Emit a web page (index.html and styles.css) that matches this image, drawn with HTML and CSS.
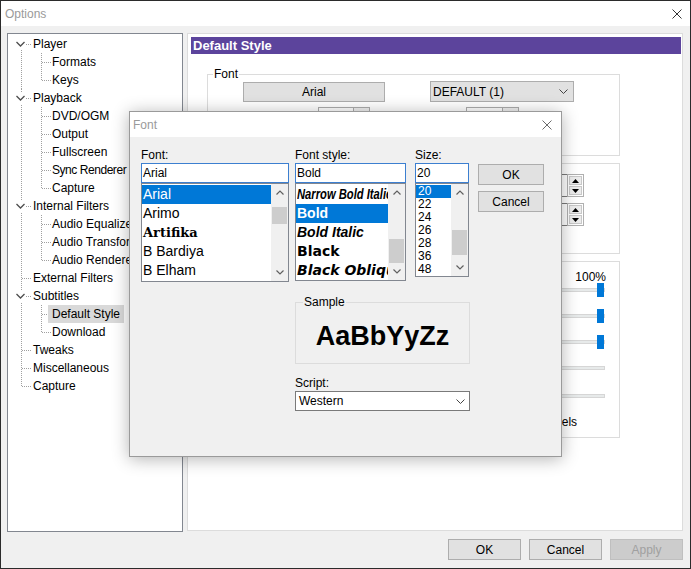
FILE: index.html
```html
<!DOCTYPE html>
<html>
<head>
<meta charset="utf-8">
<title>Options</title>
<link rel="stylesheet" href="styles.css">
</head>
<body>
<div class="window">
  <div class="titlebar">
    <span class="title">Options</span>
    <svg class="xbtn" width="10" height="10" viewBox="0 0 10 10"><path d="M0.5 0.5 L9.5 9.5 M9.5 0.5 L0.5 9.5" stroke="#333" stroke-width="1" fill="none"/></svg>
  </div>
  <div class="main">
    <div class="top">
      <div class="tree">
        <ul class="roots">
          <li class="root first">
            <div class="row"><span class="twisty"><svg width="11" height="12" viewBox="0 0 11 12"><rect width="11" height="12" fill="#fff"/><path d="M1.5 4 L5.5 8 L9.5 4" fill="none" stroke="#4d4d4d" stroke-width="1.3"/></svg></span><span class="label">Player</span></div>
            <ul class="kids">
              <li class="kid"><div class="row"><span class="label">Formats</span></div></li>
              <li class="kid last"><div class="row"><span class="label">Keys</span></div></li>
            </ul>
          </li>
          <li class="root">
            <div class="row"><span class="twisty"><svg width="11" height="12" viewBox="0 0 11 12"><rect width="11" height="12" fill="#fff"/><path d="M1.5 4 L5.5 8 L9.5 4" fill="none" stroke="#4d4d4d" stroke-width="1.3"/></svg></span><span class="label">Playback</span></div>
            <ul class="kids">
              <li class="kid"><div class="row"><span class="label">DVD/OGM</span></div></li>
              <li class="kid"><div class="row"><span class="label">Output</span></div></li>
              <li class="kid"><div class="row"><span class="label">Fullscreen</span></div></li>
              <li class="kid"><div class="row"><span class="label tight">Sync Renderer</span></div></li>
              <li class="kid last"><div class="row"><span class="label">Capture</span></div></li>
            </ul>
          </li>
          <li class="root">
            <div class="row"><span class="twisty"><svg width="11" height="12" viewBox="0 0 11 12"><rect width="11" height="12" fill="#fff"/><path d="M1.5 4 L5.5 8 L9.5 4" fill="none" stroke="#4d4d4d" stroke-width="1.3"/></svg></span><span class="label">Internal Filters</span></div>
            <ul class="kids">
              <li class="kid"><div class="row"><span class="label">Audio Equalizer</span></div></li>
              <li class="kid"><div class="row"><span class="label">Audio Transformer</span></div></li>
              <li class="kid last"><div class="row"><span class="label">Audio Renderer</span></div></li>
            </ul>
          </li>
          <li class="root">
            <div class="row"><span class="twisty"></span><span class="label">External Filters</span></div>
          </li>
          <li class="root">
            <div class="row"><span class="twisty"><svg width="11" height="12" viewBox="0 0 11 12"><rect width="11" height="12" fill="#fff"/><path d="M1.5 4 L5.5 8 L9.5 4" fill="none" stroke="#4d4d4d" stroke-width="1.3"/></svg></span><span class="label">Subtitles</span></div>
            <ul class="kids">
              <li class="kid"><div class="row"><span class="label sel">Default Style</span></div></li>
              <li class="kid last"><div class="row"><span class="label">Download</span></div></li>
            </ul>
          </li>
          <li class="root">
            <div class="row"><span class="twisty"></span><span class="label">Tweaks</span></div>
          </li>
          <li class="root">
            <div class="row"><span class="twisty"></span><span class="label">Miscellaneous</span></div>
          </li>
          <li class="root last">
            <div class="row"><span class="twisty"></span><span class="label">Capture</span></div>
          </li>
        </ul>
      </div>

      <div class="panel">
        <div class="page-header">Default Style</div>

        <div class="group g1">
          <span class="legend">Font</span>
          <div class="g1-row1">
            <div class="pbtn">Arial</div>
            <div class="combo"><span>DEFAULT (1)</span><svg width="9" height="5" viewBox="0 0 9 5"><path d="M0.5 0.5 L4.5 4.5 L8.5 0.5" fill="none" stroke="#444" stroke-width="1"/></svg></div>
          </div>
          <div class="g1-row2">
            <div class="spinbox sb1"><span class="sb-edit"></span><span class="sb-btn"></span></div>
            <div class="spinbox sb2"><span class="sb-edit"></span><span class="sb-btn"></span></div>
          </div>
        </div>

        <div class="group g2">
          <span class="legend">Position on screen</span>
          <div class="g2-row first">
            <div class="edit"></div>
            <div class="spin">
              <span><svg width="7" height="4" viewBox="0 0 7 4"><path d="M0 4 L3.5 0 L7 4 Z" fill="#000"/></svg></span>
              <span><svg width="7" height="4" viewBox="0 0 7 4"><path d="M0 0 L3.5 4 L7 0 Z" fill="#000"/></svg></span>
            </div>
          </div>
          <div class="g2-row">
            <div class="edit"></div>
            <div class="spin">
              <span><svg width="7" height="4" viewBox="0 0 7 4"><path d="M0 4 L3.5 0 L7 4 Z" fill="#000"/></svg></span>
              <span><svg width="7" height="4" viewBox="0 0 7 4"><path d="M0 0 L3.5 4 L7 0 Z" fill="#000"/></svg></span>
            </div>
          </div>
        </div>

        <div class="group g3">
          <span class="legend">Colors &amp; Transparency</span>
          <div class="pct">100%</div>
          <div class="slider first"><span class="thumb"></span></div>
          <div class="slider"><span class="thumb"></span></div>
          <div class="slider"><span class="thumb"></span></div>
          <div class="slider"><span class="thumb left"></span></div>
          <div class="slider fifth"><span class="thumb left"></span></div>
          <div class="check"><span class="cbox"></span><span>Link alpha channels</span></div>
        </div>
      </div>
    </div>

    <div class="buttons">
      <div class="btn">OK</div>
      <div class="btn">Cancel</div>
      <div class="btn disabled">Apply</div>
    </div>
  </div>

  <div class="dialog">
    <div class="dlg-title">
      <span>Font</span>
      <svg width="10" height="10" viewBox="0 0 10 10"><path d="M0.5 0.5 L9.5 9.5 M9.5 0.5 L0.5 9.5" stroke="#6a6a6a" stroke-width="1" fill="none"/></svg>
    </div>
    <div class="dlg-body">
      <div class="cols">
        <div class="col c-font">
          <div class="lbl">Font:</div>
          <div class="field">Arial</div>
          <div class="list l-font">
            <div class="items">
              <div class="it sel">Arial</div>
              <div class="it">Arimo</div>
              <div class="it artifika">Artifika</div>
              <div class="it">B Bardiya</div>
              <div class="it">B Elham</div>
            </div>
            <div class="vsb">
              <span class="arr"><svg width="8" height="5" viewBox="0 0 8 5"><path d="M0.5 4.5 L4 1 L7.5 4.5" fill="none" stroke="#606060" stroke-width="1.2"/></svg></span>
              <span class="trk"><span class="thm"></span></span>
              <span class="arr"><svg width="8" height="5" viewBox="0 0 8 5"><path d="M0.5 0.5 L4 4 L7.5 0.5" fill="none" stroke="#606060" stroke-width="1.2"/></svg></span>
            </div>
          </div>
        </div>

        <div class="col c-style">
          <div class="lbl">Font style:</div>
          <div class="field">Bold</div>
          <div class="list l-style">
            <div class="items">
              <div class="it s-nbi"><span class="narrow">Narrow Bold Italic</span></div>
              <div class="it s-b sel">Bold</div>
              <div class="it s-bi">Bold Italic</div>
              <div class="it s-black">Black</div>
              <div class="it s-blacko">Black Oblique</div>
            </div>
            <div class="vsb">
              <span class="arr"><svg width="8" height="5" viewBox="0 0 8 5"><path d="M0.5 4.5 L4 1 L7.5 4.5" fill="none" stroke="#606060" stroke-width="1.2"/></svg></span>
              <span class="trk"><span class="thm"></span></span>
              <span class="arr"><svg width="8" height="5" viewBox="0 0 8 5"><path d="M0.5 0.5 L4 4 L7.5 0.5" fill="none" stroke="#606060" stroke-width="1.2"/></svg></span>
            </div>
          </div>
        </div>

        <div class="col c-size">
          <div class="lbl">Size:</div>
          <div class="field">20</div>
          <div class="list l-size">
            <div class="items">
              <div class="it sel">20</div>
              <div class="it">22</div>
              <div class="it">24</div>
              <div class="it">26</div>
              <div class="it">28</div>
              <div class="it">36</div>
              <div class="it">48</div>
            </div>
            <div class="vsb">
              <span class="arr"><svg width="8" height="5" viewBox="0 0 8 5"><path d="M0.5 4.5 L4 1 L7.5 4.5" fill="none" stroke="#606060" stroke-width="1.2"/></svg></span>
              <span class="trk"><span class="thm"></span></span>
              <span class="arr"><svg width="8" height="5" viewBox="0 0 8 5"><path d="M0.5 0.5 L4 4 L7.5 0.5" fill="none" stroke="#606060" stroke-width="1.2"/></svg></span>
            </div>
          </div>
        </div>

        <div class="col c-btns">
          <div class="btn dbtn">OK</div>
          <div class="btn dbtn cancel">Cancel</div>
        </div>
      </div>

      <div class="lower">
        <div class="sample">
          <span class="legend dl">Sample</span>
          <div class="sample-text">AaBbYyZz</div>
        </div>
        <div class="lbl script-lbl">Script:</div>
        <div class="select"><span>Western</span><svg width="9" height="5" viewBox="0 0 9 5"><path d="M0.5 0.5 L4.5 4.5 L8.5 0.5" fill="none" stroke="#444" stroke-width="1"/></svg></div>
      </div>
    </div>
  </div>
</div>
</body>
</html>
```

FILE: styles.css
```css
* { box-sizing: border-box; }
html, body { margin: 0; padding: 0; }
body {
  width: 691px;
  height: 569px;
  overflow: hidden;
  font-family: "Liberation Sans", Arial, sans-serif;
  font-size: 12px;
  color: #000;
  background: #f0f0f0;
}
ul { list-style: none; margin: 0; padding: 0; }

.window {
  position: relative;
  width: 691px;
  height: 569px;
  border: 1px solid #2b2b2b;
  background: #f0f0f0;
  display: flex;
  flex-direction: column;
}

.titlebar {
  height: 25px;
  flex: none;
  background: #fff;
  display: flex;
  align-items: center;
  justify-content: space-between;
  padding: 0 8px 0 4px;
  color: #9a9a9a;
  font-size: 12px;
}

.main { padding: 7px 7px 0 6px; }
.top { display: flex; gap: 4px; align-items: flex-start; }

/* ---------- tree ---------- */
.tree {
  width: 176px;
  height: 499px;
  border: 1px solid #828790;
  background: #fff;
  padding-top: 1px;
  overflow: hidden;
}
.row { height: 18px; display: flex; white-space: nowrap; }
.label { line-height: 18px; padding: 0 4px; }
.label.tight { letter-spacing: -0.45px; }
.label.sel { background: #d9d9d9; }
.twisty { width: 21px; flex: none; display: flex; align-items: center; }
.twisty svg { margin-left: 7px; }

.root {
  background: repeating-linear-gradient(to bottom, #a0a0a0 0 1px, transparent 1px 2px) 13px 0 / 1px 100% no-repeat;
}
.root.first { background-position: 13px 9px; }
.root.last { background-size: 1px 10px; }
.root > .row {
  background: repeating-linear-gradient(to right, #a0a0a0 0 1px, transparent 1px 2px) 14px 9px / 9px 1px no-repeat;
}
.kid {
  background: repeating-linear-gradient(to bottom, #a0a0a0 0 1px, transparent 1px 2px) 33px 0 / 1px 100% no-repeat;
}
.kid.last { background-size: 1px 10px; }
.kid > .row {
  padding-left: 40px;
  background: repeating-linear-gradient(to right, #a0a0a0 0 1px, transparent 1px 2px) 34px 9px / 9px 1px no-repeat;
}

/* ---------- right panel ---------- */
.panel {
  width: 496px;
  height: 498px;
  border: 1px solid #dcdcdc;
  background: #fff;
  padding: 3px 1px 0 3px;
}
.page-header {
  height: 17px;
  background: #5c449c;
  color: #fff;
  font-weight: bold;
  font-size: 13px;
  line-height: 17px;
  padding-left: 2px;
}
.group {
  margin-left: 16px;
  width: 413px;
  border: 1px solid #dcdcdc;
}
.legend {
  display: block;
  width: max-content;
  margin: -8px 0 0 5px;
  padding: 0 1px;
  line-height: 14px;
  background: #fff;
}
.g1 { margin-top: 20px; height: 82px; }
.g2 { margin-top: 7px; height: 91px; }
.g3 { margin-top: 7px; height: 177px; }

.g1-row1 { display: flex; align-items: flex-start; }
.pbtn {
  margin: 1px 0 0 35px;
  width: 142px;
  height: 20px;
  border: 1px solid #adadad;
  background: #e1e1e1;
  display: flex;
  align-items: center;
  justify-content: center;
}
.combo {
  margin-left: 45px;
  width: 144px;
  height: 21px;
  border: 1px solid #adadad;
  background: #e1e1e1;
  display: flex;
  align-items: center;
  justify-content: space-between;
  padding: 0 5px 0 2px;
}
.g1-row2 { display: flex; margin-top: 5px; }
.spinbox { display: flex; height: 20px; border: 1px solid #adadad; }
.sb1 { margin-left: 110px; width: 52px; }
.sb2 { margin-left: 96px; width: 53px; }
.sb-edit { flex: 1; background: #fff; }
.sb-btn { width: 16px; border-left: 1px solid #adadad; background: #f0f0f0; }

.g2-row { display: flex; margin-top: 6px; padding-left: 300px; }
.g2-row.first { margin-top: 4px; }
.edit { width: 59px; height: 23px; border: 1px solid #7a7a7a; border-right: 0; background: #fff; }
.spin {
  width: 17px;
  height: 23px;
  border: 1px solid #b0b0b0;
  display: flex;
  flex-direction: column;
  gap: 1px;
  padding: 1px;
  background: #fff;
}
.spin span {
  flex: 1;
  border: 1px solid #c8c8c8;
  background: #ececec;
  display: flex;
  align-items: center;
  justify-content: center;
}

.pct { margin-top: 2px; line-height: 14px; text-align: right; padding-right: 13px; }
.slider {
  width: 300px;
  height: 14px;
  margin: 12px 14px 0 auto;
  display: flex;
  justify-content: flex-end;
  background:
    linear-gradient(#e7eaea, #e7eaea) center / calc(100% - 2px) 2px no-repeat,
    linear-gradient(#d6d6d6, #d6d6d6) center / 100% 4px no-repeat;
}
.slider.first { margin-top: -1px; }
.slider.fifth { margin-top: 14px; }
.thumb { width: 7px; height: 14px; background: #0078d7; margin-right: 1px; }
.thumb.left { margin-right: auto; margin-left: 0; }
.check {
  margin-top: 12px;
  padding-left: 246px;
  display: flex;
  align-items: center;
  gap: 4px;
  line-height: 14px;
}
.cbox { width: 13px; height: 13px; border: 1px solid #333; background: #fff; }

/* ---------- bottom buttons ---------- */
.buttons { display: flex; justify-content: flex-end; gap: 8px; margin-top: 7px; }
.btn {
  width: 73px;
  height: 21px;
  border: 1px solid #adadad;
  background: #e1e1e1;
  display: flex;
  align-items: center;
  justify-content: center;
}
.btn.disabled { background: #cccccc; border-color: #bfbfbf; color: #a0a0a0; }

/* ---------- Font dialog (overlay) ---------- */
.dialog {
  position: absolute;
  left: 128px;
  top: 110px;
  width: 433px;
  height: 346px;
  border: 1px solid #9a9a9a;
  background: #f0f0f0;
  box-shadow: 0 2px 16px rgba(0, 0, 0, 0.3);
}
.dlg-title {
  height: 25px;
  background: #fff;
  display: flex;
  align-items: center;
  justify-content: space-between;
  padding: 0 9px 0 3px;
  color: #9a9a9a;
}
.dlg-body { padding: 11px 0 0 11px; }
.cols { display: flex; align-items: flex-start; }
.c-font { width: 148px; margin-right: 6px; }
.c-style { width: 111px; margin-right: 9px; }
.c-size { width: 54px; margin-right: 9px; }
.c-btns { width: 66px; padding-top: 16px; }
.lbl { height: 14px; line-height: 14px; margin-bottom: 1px; }
.field {
  height: 20px;
  border: 1px solid #3c7fd0;
  background: #fff;
  line-height: 18px;
  padding-left: 1px;
}
.list {
  display: flex;
  border: 1px solid #828790;
  background: #fff;
  overflow: hidden;
}
.l-font { height: 99px; }
.l-style { height: 98px; }
.l-size { height: 94px; }
.items { flex: 1; min-width: 0; padding-top: 1px; overflow: hidden; }
.it { white-space: nowrap; overflow: hidden; font-size: 14px; line-height: 19px; height: 19px; padding-left: 1px; }
.it.sel { background: #0078d7; color: #fff; }
.artifika { font-family: "DejaVu Serif", serif; font-weight: bold; font-size: 13px; }
.s-nbi { font-weight: bold; font-style: italic; }
.narrow { display: inline-block; transform: scaleX(0.8); transform-origin: 0 50%; }
.s-b { font-weight: bold; }
.s-bi { font-weight: bold; font-style: italic; }
.s-black { font-family: "DejaVu Sans", sans-serif; font-weight: bold; }
.s-blacko { font-family: "DejaVu Sans", sans-serif; font-weight: bold; font-style: oblique; }
.l-size .it { font-size: 12px; line-height: 13px; height: 13px; padding-left: 2px; }

.vsb { width: 17px; flex: none; display: flex; flex-direction: column; background: #f0f0f0; }
.arr { height: 17px; flex: none; display: flex; align-items: center; justify-content: center; }
.trk { flex: 1; min-height: 0; display: flex; flex-direction: column; }
.thm { background: #cdcdcd; margin: 0 1px; flex: none; }
.l-font .thm { margin-top: 6px; height: 17px; }
.l-style .thm { margin-top: 38px; height: 24px; }
.l-size .thm { margin-top: 29px; height: 25px; }

.dbtn { width: 66px; }
.dbtn.cancel { margin-top: 6px; }

.lower { margin-left: 154px; width: 175px; }
.sample {
  margin-top: 20px;
  height: 62px;
  border: 1px solid #dcdcdc;
  display: flex;
  flex-direction: column;
}
.legend.dl { background: #f0f0f0; margin-left: 7px; }
.sample-text {
  flex: 1;
  display: flex;
  align-items: center;
  justify-content: center;
  font-size: 27px;
  font-weight: bold;
}
.script-lbl { margin-top: 12px; }
.select {
  margin-top: 1px;
  height: 20px;
  border: 1px solid #7a7a7a;
  background: #fff;
  display: flex;
  align-items: center;
  justify-content: space-between;
  padding: 0 4px 0 3px;
}
```
